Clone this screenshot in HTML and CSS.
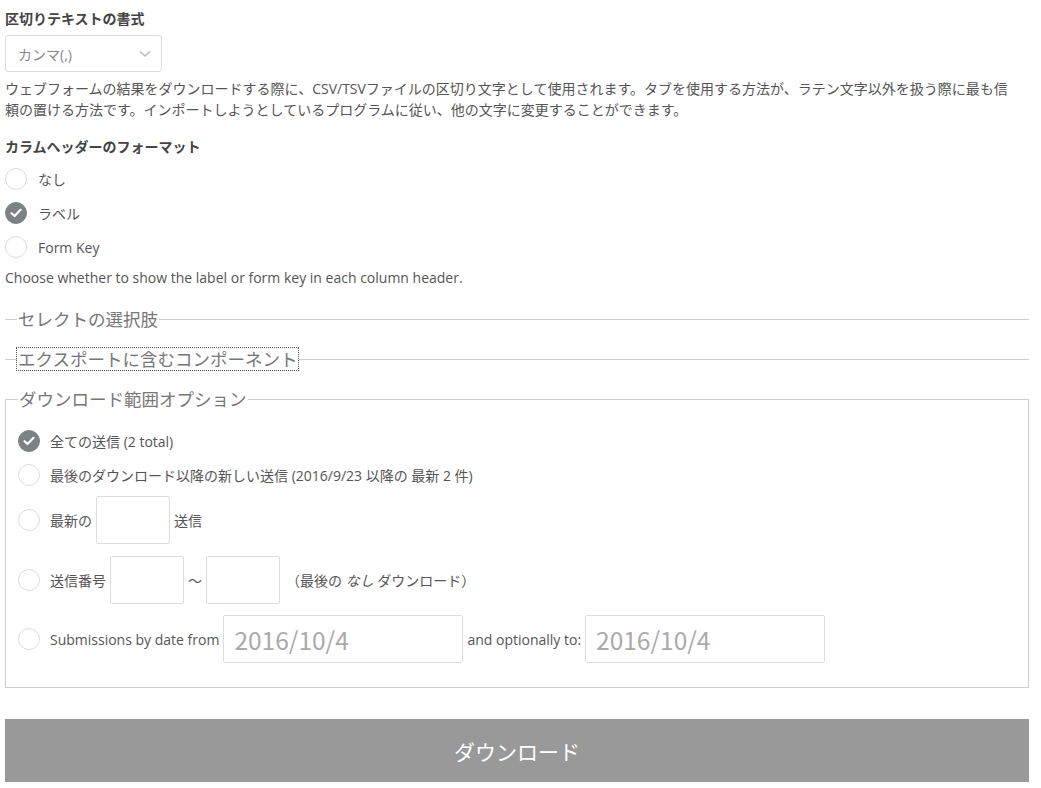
FILE: index.html
```html
<!DOCTYPE html>
<html lang="ja">
<head>
<meta charset="utf-8">
<title>ダウンロード</title>
<link rel="stylesheet" href="styles.css">
</head>
<body>
<div class="page">
  <div class="field">
    <div class="heading">区切りテキストの書式</div>
    <div class="select">
      <span>カンマ(,)</span>
      <svg class="chev" width="12" height="8" viewBox="0 0 12 8"><path d="M1 1.5 L6 6 L11 1.5" fill="none" stroke="#bbb" stroke-width="1.6"/></svg>
    </div>
    <p class="desc">ウェブフォームの結果をダウンロードする際に、CSV/TSVファイルの区切り文字として使用されます。タブを使用する方法が、ラテン文字以外を扱う際に最も信頼の置ける方法です。インポートしようとしているプログラムに従い、他の文字に変更することができます。</p>
  </div>

  <div class="field">
    <div class="heading h2">カラムヘッダーのフォーマット</div>
    <div class="radios">
      <div class="radio-row"><span class="radio"></span><span>なし</span></div>
      <div class="radio-row"><span class="radio checked"><svg width="12" height="10" viewBox="0 0 12 10"><path d="M1.5 5.2 L4.6 8 L10.5 1.8" fill="none" stroke="#fff" stroke-width="2.2" stroke-linecap="round" stroke-linejoin="round"/></svg></span><span>ラベル</span></div>
      <div class="radio-row"><span class="radio"></span><span>Form Key</span></div>
    </div>
    <p class="help">Choose whether to show the label or form key in each column header.</p>
  </div>

  <fieldset class="collapsed first"><legend>セレクトの選択肢</legend></fieldset>
  <fieldset class="collapsed"><legend class="focused">エクスポートに含むコンポーネント</legend></fieldset>

  <fieldset class="range">
    <legend>ダウンロード範囲オプション</legend>
    <div class="radio-row"><span class="radio checked"><svg width="12" height="10" viewBox="0 0 12 10"><path d="M1.5 5.2 L4.6 8 L10.5 1.8" fill="none" stroke="#fff" stroke-width="2.2" stroke-linecap="round" stroke-linejoin="round"/></svg></span><span>全ての送信 (2 total)</span></div>
    <div class="radio-row"><span class="radio"></span><span>最後のダウンロード以降の新しい送信 (2016/9/23 以降の 最新 2 件)</span></div>
    <div class="radio-row input-row r3"><span class="radio"></span><span>最新の</span><span class="box small"></span><span>送信</span></div>
    <div class="radio-row input-row r4"><span class="radio"></span><span>送信番号</span><span class="box small"></span><span>～</span><span class="box small"></span><span class="note">（最後の <em>なし</em> ダウンロード）</span></div>
    <div class="radio-row input-row r5"><span class="radio"></span><span>Submissions by date from</span><span class="box date">2016/10/4</span><span>and optionally to:</span><span class="box date">2016/10/4</span></div>
  </fieldset>

  <div class="button">ダウンロード</div>
</div>
</body>
</html>
```

FILE: styles.css
```css
html, body {
  margin: 0;
  padding: 0;
  background: #fff;
}
body {
  font-family: "Open Sans", "Noto Sans CJK JP", sans-serif;
  font-size: 14px;
  color: #555;
}
.page {
  width: 1024px;
  margin-left: 5px;
  padding-top: 9px;
}
.heading {
  font-weight: bold;
  font-size: 14px;
  line-height: 20px;
  color: #444;
}
.select {
  margin-top: 6px;
  border: 1px solid #ddd;
  border-radius: 3px;
  display: flex;
  align-items: center;
  justify-content: space-between;
  padding: 0 10px 0 12px;
  box-sizing: border-box;
  width: 157px;
  height: 37px;
  color: #888;
}
.desc {
  margin: 6px 0 0;
  padding-right: 9px;
  line-height: 21px;
}
.h2 {
  margin-top: 17px;
}
.radios {
  margin-top: 5px;
}
.radio-row {
  display: flex;
  align-items: center;
  min-height: 34px;
  gap: 11px;
}
.radio {
  width: 22px;
  height: 22px;
  border-radius: 50%;
  border: 1px solid #ddd;
  box-sizing: border-box;
  background: #fff;
  flex: none;
  display: flex;
  align-items: center;
  justify-content: center;
}
.radio.checked {
  background: #7c8283;
  border-color: #7c8283;
}
.help {
  margin: 4px 0 0;
  line-height: 20px;
}
fieldset {
  margin: 0;
  border: 1px solid #ccc;
  padding: 0 0 0 12px;
  min-width: 0;
}
fieldset.collapsed {
  border-width: 1px 0 0 0;
  margin-top: 18px;
}
fieldset.first {
  margin-top: 20px;
}
legend {
  font-size: 17.5px;
  line-height: 22px;
  color: #777;
  padding: 0 1px;
}
legend.focused {
  outline: 1px dotted #555;
}
fieldset.range {
  margin-top: 18px;
  padding: 14px 12px 20px 12px;
}
.range .radio-row {
  gap: 10px;
}
.range .input-row {
  gap: 4px;
  padding: 4px 0;
}
.r4 {
  margin-top: 4px;
}
.r5 {
  margin-top: 3px;
}
.input-row .radio {
  margin-right: 6px;
}
.box {
  border: 1px solid #ddd;
  border-radius: 2px;
  box-sizing: border-box;
  height: 48px;
  background: #fff;
}
.box.small {
  width: 74px;
}
.box.date {
  width: 240px;
  font-family: "Noto Sans CJK JP", sans-serif;
  font-size: 24.5px;
  color: #aaa;
  display: flex;
  align-items: center;
  padding-left: 10px;
}
.note {
  margin-left: 2px;
}
.note em {
  font-style: italic;
}
.button {
  margin-top: 31px;
  height: 63px;
  background: #999;
  color: #fff;
  font-family: "Noto Sans CJK JP", sans-serif;
  font-size: 21px;
  display: flex;
  align-items: center;
  justify-content: center;
}
```
